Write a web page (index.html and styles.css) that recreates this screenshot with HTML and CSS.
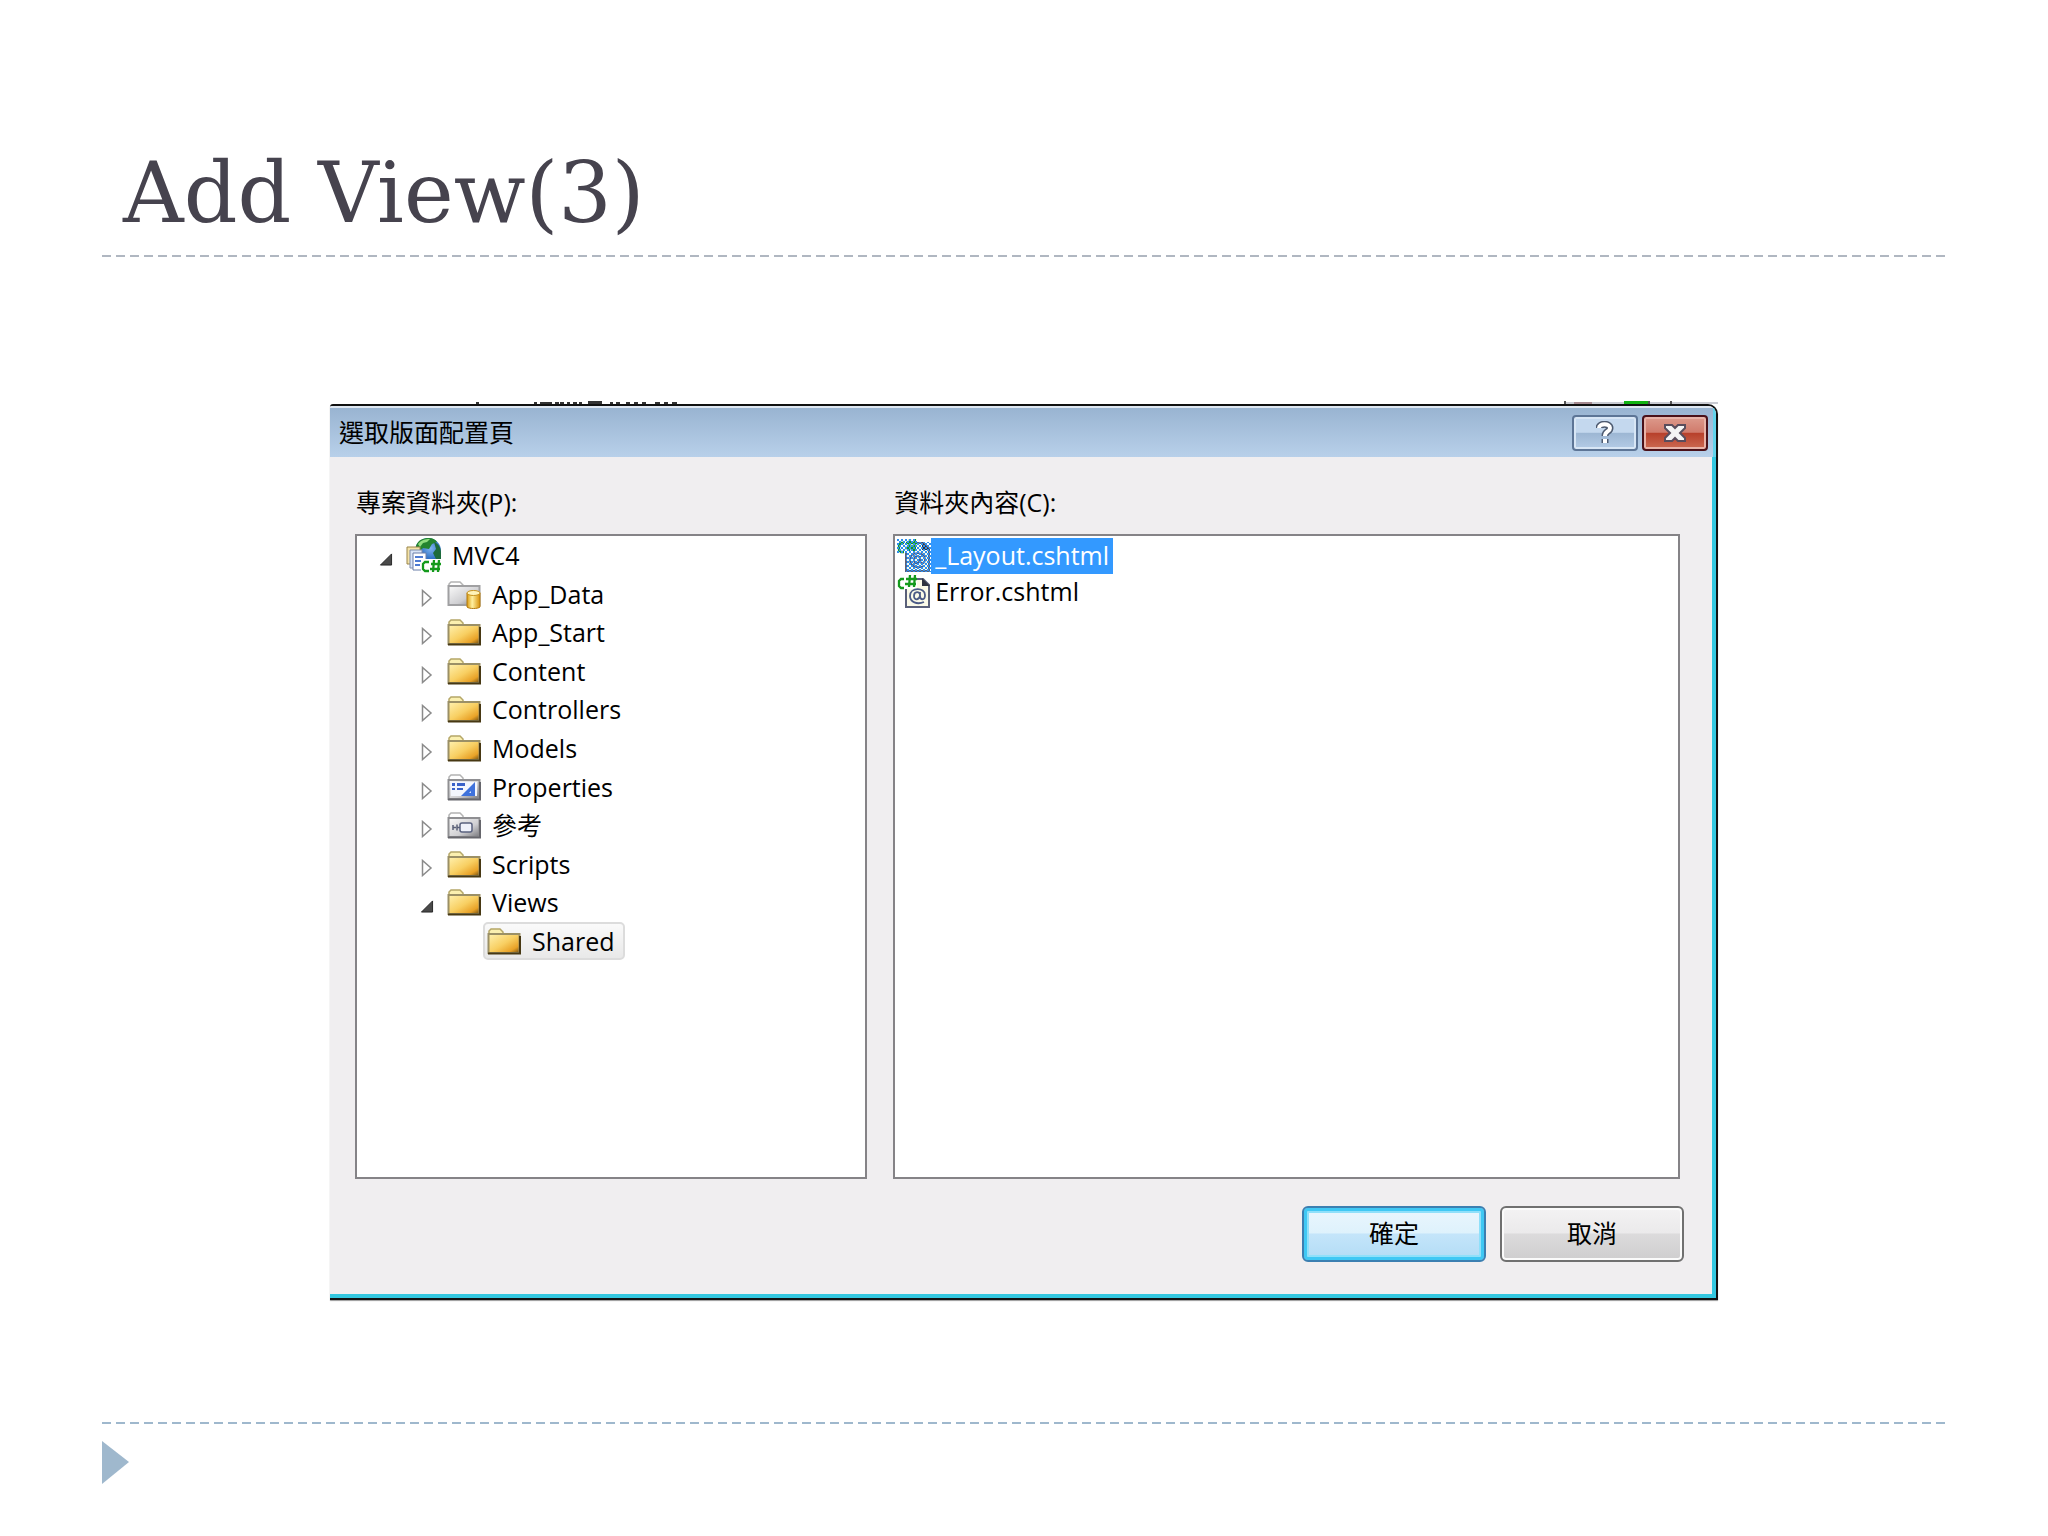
FILE: index.html
```
<!DOCTYPE html>
<html lang="zh-Hant">
<head>
<meta charset="utf-8">
<title>Add View(3)</title>
<meta name="viewport" content="width=device-width, initial-scale=1">
<link rel="stylesheet" href="styles.css">
</head>
<body>
<svg class="defs" width="0" height="0" aria-hidden="true">
  <defs>
    <linearGradient id="gold" x1="0" y1="0" x2="1" y2="1"><stop offset="0" stop-color="#fff2b0"/><stop offset=".5" stop-color="#f8cf62"/><stop offset=".8" stop-color="#e9a227"/><stop offset="1" stop-color="#6b4a10"/></linearGradient>
    <linearGradient id="silver" x1="0" y1="0" x2="1" y2="1"><stop offset="0" stop-color="#fafafa"/><stop offset=".6" stop-color="#cfcfd2"/><stop offset="1" stop-color="#77777c"/></linearGradient>
    <linearGradient id="drum" x1="0" y1="0" x2="1" y2="0"><stop offset="0" stop-color="#d99a10"/><stop offset=".4" stop-color="#fff0a0"/><stop offset="1" stop-color="#d89108"/></linearGradient>
    <radialGradient id="globe" cx=".6" cy=".4" r=".7"><stop offset="0" stop-color="#7fb4ee"/><stop offset=".6" stop-color="#2c6fc4"/><stop offset="1" stop-color="#153c86"/></radialGradient>
    <pattern id="dither" width="4" height="4" patternUnits="userSpaceOnUse"><path d="M0 0h2v2H0zM2 2h2v2H2z" fill="#2f8fee"/></pattern>
    <symbol id="folder" viewBox="0 0 34 28">
      <path d="M2 6V3l2-2h9l3 3v2" fill="#fbf0b0" stroke="#b5a768" stroke-width="1.5"/>
      <path d="M1.500 6h31v19h-31z" fill="url(#gold)" stroke="#9b9066" stroke-width="2"/>
      <path d="M1 25.500h32V8" fill="none" stroke="#473813" stroke-width="2"/>
    </symbol>
    <symbol id="folder-gray" viewBox="0 0 34 28">
      <path d="M2 6V3l2-2h9l3 3v2" fill="#fff" stroke="#b3b3b3" stroke-width="1.500"/>
      <path d="M1.500 6h31v19h-31z" fill="url(#silver)" stroke="#8f8f92" stroke-width="2"/>
      <path d="M1 25.500h32V8" fill="none" stroke="#66666c" stroke-width="2"/>
    </symbol>
    <symbol id="folder-data" viewBox="0 0 34 28">
      <path d="M2 6V3l2-2h9l3 3v2" fill="#fff" stroke="#b3b3b3" stroke-width="1.500"/>
      <path d="M1.500 5h31v19h-31z" fill="url(#silver)" stroke="#a0a0a2" stroke-width="2"/>
      <path d="M20 12v14c2 2 11 2 13 0V12z" fill="url(#drum)" stroke="#b27a10"/>
      <ellipse cx="26.500" cy="12" rx="6.500" ry="2.500" fill="#fff3b8" stroke="#c79320"/>
    </symbol>
    <symbol id="folder-props" viewBox="0 0 34 28">
      <use href="#folder-gray" width="34" height="28"/>
      <path d="M4 8h26v14H4z" fill="#f3f6fd"/>
      <path d="M5 9h3v3H5zm5 0h8v3h-8zM5 14h3v2H5zm5 0h6v2h-6z" fill="#3a62c8"/>
      <path d="M28 8v14H14z" fill="#3f72dc"/>
      <path d="M24 17v2h-2z" fill="#dfe9fb"/>
    </symbol>
    <symbol id="folder-refs" viewBox="0 0 34 28">
      <use href="#folder-gray" width="34" height="28"/>
      <path d="M6 13v5m0-2.500h3m1-3v6m0-3h3" stroke="#5a6077" stroke-width="1.500" fill="none"/>
      <rect x="13" y="11" width="12" height="9" rx="2" fill="#eef1fa" stroke="#59617f" stroke-width="1.500"/>
    </symbol>
    <symbol id="project" viewBox="0 0 36 36">
      <circle cx="22" cy="14" r="13" fill="url(#globe)"/>
      <path d="M10 9C12 3 17 1 23 1c4 0 7 2 8 4l-5 2-3 5-6-1-4 4z" fill="#23842f"/>
      <path d="M12 7c3-4 7-5 12-5l-3 3-4 1-3 4z" fill="#8fdd7e"/>
      <path d="M28 5c5 2 7 6 7 11v9l-5-3-3-6 3-4z" fill="#1d6b3a"/>
      <path d="M1 10h13v17H1z" fill="#f4e2a8" stroke="#9a8548"/>
      <path d="M4 13h12v18H4z" fill="#d9e4f6" stroke="#7e8dab"/>
      <path d="M7 16h13v17H7z" fill="#fff" stroke="#6b7fa8"/>
      <path d="M9 20h8M9 24h6M9 28h5" stroke="#4e7bd2" stroke-width="2"/>
      <path d="M15 22h20v13H15z" fill="#fff"/>
      <path d="M23 25h-4l-2 2v5l2 2h4M28 23l-1 12M33 23l-1 12M25 27h10M24 32h10" fill="none" stroke="#149a1c" stroke-width="2.300"/>
    </symbol>
    <symbol id="razor" viewBox="0 0 34 34">
      <path d="M9 4h17l6 6v22H9z" fill="#fbfae8" stroke="#5a6079" stroke-width="2"/>
      <path d="M25 3v8h8z" fill="#2f3340"/>
      <path d="M0 0h20v14H0z" fill="#fff"/>
      <path d="M7 4H4L2 6v5l2 2h3M13 0l-1 12M18 0l-1 12M9 4h11M8 9h11" fill="none" stroke="#149a1c" stroke-width="2.300"/>
      <path d="M27 27c-7 3-14 0-14-6 0-9 15-9 15-1 0 6-5 5-5 1v-4m0 3c0-4-6-4-6 1s6 4 6-1" fill="none" stroke="#4c5b86" stroke-width="1.800"/>
    </symbol>
    <symbol id="open" viewBox="0 0 14 14"><path d="M13 1v12H1z" fill="#4a4a4a" stroke="#222"/></symbol>
    <symbol id="closed" viewBox="0 0 12 18"><path d="M1.500 1.500v15L10 9z" fill="#fff" stroke="#8b8b8b" stroke-width="1.500"/></symbol>
  </defs>
</svg>

<main class="slide">
  <h1 class="slide-title">Add View(3)</h1>
  <svg class="rule" aria-hidden="true"><line x1="0" y1="1" x2="100%" y2="1"/></svg>

  <section class="stage">
    <div class="behind" aria-hidden="true">
      <svg class="scraps-left" viewBox="0 0 204 4"><path d="M0 2h3v2H0zM58 2h3v2h-3zM64 2h12v2H64zM79 2h4v2h-4zM84 2h4v2h-4zM91 2h3v2h-3zM97 2h4v2h-4zM103 2h3v2h-3zM112 1h14v3h-14zM134 2h3v2h-3zM140 2h4v2h-4zM150 2h4v2h-4zM158 2h4v2h-4zM166 2h4v2h-4zM179 2h5v2h-5zM188 2h4v2h-4zM196 2h5v2h-5z" fill="#333"/></svg>
      <svg class="scraps-right" viewBox="0 0 154 4"><path d="M0 2h154v2H0z" fill="#c9cbd2"/><path d="M0 1h2v3H0zM84 1h2v3h-2zM106 1h2v3h-2z" fill="#555"/><path d="M10 2h18v2H10z" fill="#a58a90"/><path d="M60 1h24v3H60z" fill="#12b312"/></svg>
    </div>
    <div class="dialog" role="dialog" aria-labelledby="dialog-title">
      <header class="titlebar">
        <h2 class="dialog-title" id="dialog-title">選取版面配置頁</h2>
        <button class="caption help" type="button" aria-label="說明">
          <svg width="18" height="24" viewBox="0 0 18 24"><path d="M3 7c0-5 11-5 11 0 0 4-5 3-5 8m0 3v4" fill="none" stroke="#4d5a70" stroke-width="7"/><path d="M3 7c0-5 11-5 11 0 0 4-5 3-5 8m0 3v4" fill="none" stroke="#fff" stroke-width="4"/></svg>
        </button>
        <button class="caption close" type="button" aria-label="關閉">
          <svg width="24" height="20" viewBox="0 0 24 20"><path d="M2 2h7l3 3 3-3h7v3l-5 5 5 5v3h-7l-3-3-3 3H2v-3l5-5-5-5z" fill="#f4f4f4" stroke="#5a4d5c" stroke-width="2"/></svg>
        </button>
      </header>

      <div class="body">
        <div class="panes">
          <section class="pane-group">
            <h3 class="label" id="folders-label">專案資料夾(P):</h3>
            <div class="pane">
              <ul class="tree" role="tree" aria-labelledby="folders-label">
                <li class="node root" role="treeitem"><svg class="arrow open"><use href="#open"/></svg><svg class="icon project"><use href="#project"/></svg><span>MVC4</span></li>
                <li class="node" role="treeitem"><svg class="arrow"><use href="#closed"/></svg><svg class="icon"><use href="#folder-data"/></svg><span>App_Data</span></li>
                <li class="node" role="treeitem"><svg class="arrow"><use href="#closed"/></svg><svg class="icon"><use href="#folder"/></svg><span>App_Start</span></li>
                <li class="node" role="treeitem"><svg class="arrow"><use href="#closed"/></svg><svg class="icon"><use href="#folder"/></svg><span>Content</span></li>
                <li class="node" role="treeitem"><svg class="arrow"><use href="#closed"/></svg><svg class="icon"><use href="#folder"/></svg><span>Controllers</span></li>
                <li class="node" role="treeitem"><svg class="arrow"><use href="#closed"/></svg><svg class="icon"><use href="#folder"/></svg><span>Models</span></li>
                <li class="node" role="treeitem"><svg class="arrow"><use href="#closed"/></svg><svg class="icon"><use href="#folder-props"/></svg><span>Properties</span></li>
                <li class="node" role="treeitem"><svg class="arrow"><use href="#closed"/></svg><svg class="icon"><use href="#folder-refs"/></svg><span>參考</span></li>
                <li class="node" role="treeitem"><svg class="arrow"><use href="#closed"/></svg><svg class="icon"><use href="#folder"/></svg><span>Scripts</span></li>
                <li class="node" role="treeitem"><svg class="arrow open"><use href="#open"/></svg><svg class="icon"><use href="#folder"/></svg><span>Views</span></li>
                <li class="node leaf" role="treeitem" aria-selected="true"><span class="selected"><svg class="icon"><use href="#folder"/></svg><span>Shared</span></span></li>
              </ul>
            </div>
          </section>
          <section class="pane-group">
            <h3 class="label" id="files-label">資料夾內容(C):</h3>
            <div class="pane">
              <ul class="files" role="listbox" aria-labelledby="files-label">
                <li class="file" role="option" aria-selected="true"><svg class="file-icon" viewBox="0 0 34 34"><use href="#razor" width="34" height="34"/><path d="M9 3h25v30H9zM0 0h20v14H0z" fill="url(#dither)"/></svg><span class="file-name current">_Layout.cshtml</span></li>
                <li class="file" role="option"><svg class="file-icon" viewBox="0 0 34 34"><use href="#razor" width="34" height="34"/></svg><span class="file-name">Error.cshtml</span></li>
              </ul>
            </div>
          </section>
        </div>
        <footer class="actions">
          <button class="button primary" type="button">確定</button>
          <button class="button" type="button">取消</button>
        </footer>
      </div>
    </div>
  </section>

  <svg class="rule blue" aria-hidden="true"><line x1="0" y1="1" x2="100%" y2="1"/></svg>
  <svg class="marker" viewBox="0 0 27 43" aria-hidden="true"><path d="M0 0l27 21L0 43z"/></svg>
</main>
</body>
</html>
```

FILE: styles.css
```
* {
  box-sizing: border-box;
}

body {
  margin: 0;
  background: #fff;
  color: #000;
  font: 25px/38px "Open Sans", "Noto Sans CJK TC", sans-serif;
}

.defs {
  position: absolute;
}

.slide {
  display: flex;
  flex-direction: column;
  min-height: 100vh;
  padding: 133px 101px 52px 102px;
}

.slide-title {
  margin: 0 0 2px;
  padding: 0 21px;
  color: #46434e;
  font: 84px/120px "DejaVu Serif", serif;
}

.rule {
  display: block;
  width: 100%;
  height: 2px;
  stroke: #b0b7c1;
  stroke-width: 2;
  stroke-dasharray: 9 5;
}

.rule.blue {
  stroke: #9fb8cd;
}

.marker {
  width: 27px;
  height: 43px;
  margin-top: 17px;
  fill: #9fb8cd;
}

.stage {
  flex: 1;
  padding: 143px 229px 0 228px;
}

.behind {
  display: flex;
  justify-content: space-between;
  height: 4px;
  padding-left: 146px;
}

.scraps-left {
  width: 204px;
  height: 4px;
}

.scraps-right {
  width: 154px;
  height: 4px;
}

.dialog {
  overflow: hidden;
  border: solid #111;
  border-width: 2px 2px 2px 0;
  border-radius: 3px 10px 0 0;
  box-shadow: 0 1px 1px #999;
}

.titlebar {
  display: flex;
  align-items: flex-start;
  gap: 4px;
  height: 51px;
  padding: 7px 5px 0 9px;
  border-top: 2px solid #dfe8f2;
  border-right: 3px solid #62d4ec;
  background: linear-gradient(#99b4d1, #b8d0ea);
}

.dialog-title {
  flex: 1;
  margin: 0;
  font-size: 25px;
  font-weight: 400;
  line-height: 34px;
}

.caption {
  display: grid;
  place-items: center;
  width: 66px;
  height: 36px;
  padding: 0;
  border: 2px solid #5d7596;
  border-radius: 4px;
  background: linear-gradient(#c4d8ee 48%, #9cb6d3 50%, #b4cce6);
  box-shadow: inset 0 0 0 2px #d8e6f5;
}

.close {
  border-color: #4a1119;
  background: linear-gradient(#dd9a8c 0, #d07b6c 48%, #b7402b 50%, #cc6a52);
  box-shadow: inset 0 0 0 2px #e8b3a8;
}

.body {
  padding: 26px 32px 32px 25px;
  border: solid #33c7e0;
  border-width: 0 4px 4px 0;
  background: #f0eef0;
}

.panes {
  display: grid;
  grid-template-columns: 513fr 788fr;
  gap: 26px;
}

.label {
  margin: 0 0 13px;
  padding-left: 1px;
  font-size: 25px;
  font-weight: 400;
  line-height: 38px;
}

.pane {
  height: 645px;
  border: 2px solid #858387;
  background: #fff;
}

.tree,
.files {
  margin: 0;
  padding: 0;
  list-style: none;
}

.tree {
  display: grid;
  grid-auto-rows: 1fr;
  height: 424px;
}

.node {
  display: flex;
  align-items: center;
  padding-left: 62px;
}

.root {
  padding-left: 21px;
}

.leaf {
  padding-left: 126px;
}

.arrow {
  width: 16px;
  height: 18px;
  margin: 8px 12px 0 0;
}

.arrow.open {
  height: 13px;
}

.icon {
  width: 34px;
  height: 28px;
  margin: 2px 11px 0 0;
}

.icon.project {
  width: 36px;
  height: 36px;
  margin: 0 10px 0 0;
}

.selected {
  display: flex;
  align-items: center;
  height: 38px;
  padding: 0 9px 0 2px;
  border: 2px solid #dcdcdc;
  border-radius: 5px;
  background: linear-gradient(#fafafa, #e9e9e9);
}

.files {
  padding: 2px;
}

.file {
  display: flex;
  align-items: center;
  height: 36px;
}

.file-icon {
  width: 34px;
  height: 34px;
}

.file-name {
  padding: 0 4px 2px;
  line-height: 34px;
}

.current {
  background: #3399ff;
  color: #fff;
}

.actions {
  display: flex;
  justify-content: flex-end;
  gap: 14px;
  margin: 27px -4px 0 0;
}

.button {
  width: 184px;
  height: 56px;
  padding: 0 0 2px;
  border: 2px solid #707070;
  border-radius: 6px;
  background: linear-gradient(#f3f2f3, #ebeaeb 48%, #dcdbdc 50%, #cfcecf);
  box-shadow: inset 0 0 0 2px #fbfbfb;
  color: #000;
  font: inherit;
}

.primary {
  border-color: #3c7fb1;
  background: linear-gradient(#eaf6fd, #def2fc 48%, #c4e5fa 50%, #b2dcf5);
  box-shadow: inset 0 0 0 3px #3fc8f4, inset 0 0 0 5px #8fe0fa;
}
```
